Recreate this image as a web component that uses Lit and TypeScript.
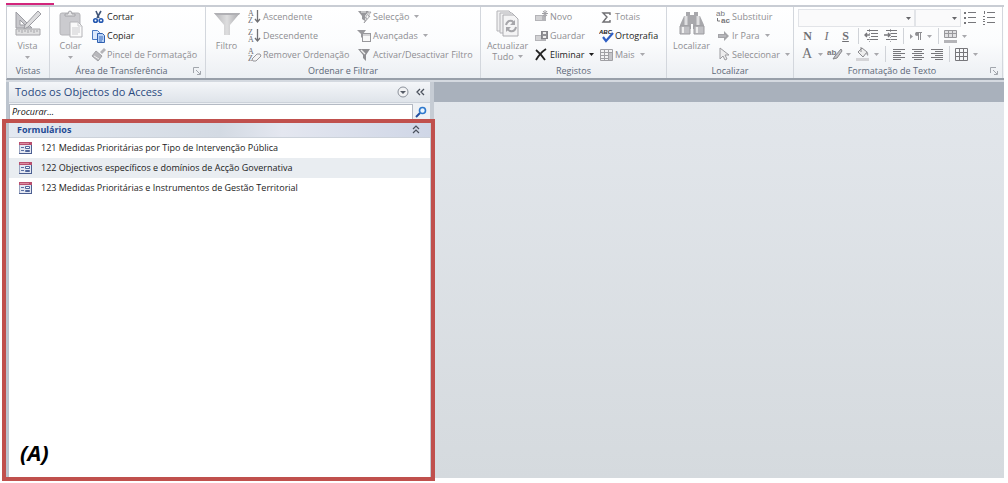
import { LitElement, html, svg, css, nothing, TemplateResult } from "lit";
import { customElement, property } from "lit/decorators.js";

type Art = ReturnType<typeof svg>;

const big: Record<string, Art> = {
  design: svg`<path d="M2 2v16h16z" fill="#c8c8cc" stroke="#9c9ca2"/><path d="M6 10v5h5z" fill="#fff" stroke="#9c9ca2"/>
    <path d="M24 1l3 3L14 17l-4 2 1-4z" fill="#dcdcde" stroke="#9c9ca2"/>
    <path d="M2 19h24v6H2z" fill="#dededf" stroke="#a6a6aa"/><path d="M5 20v2M8 20v3M11 20v2M14 20v3M17 20v2M20 20v3M23 20v2" stroke="#a6a6aa"/>`,
  paste: svg`<rect x="3" y="3" width="20" height="22" rx="2" fill="#cbcbcf" stroke="#b4b4b8"/><path d="M8 6V4h3q0-3 2-3t2 3h3v2z" fill="#e6e6e8" stroke="#a4a4a8"/>
    <path d="M13 12h8l4 4v11H13z" fill="#fafafa" stroke="#b4b4b8"/><path d="M21 12v4h4M15 18h8M15 20h8M15 22h8M15 24h6" fill="none" stroke="#cccccf"/>`,
  funnel: svg`<defs><linearGradient id="g"><stop stop-color="#b4b4b7"/><stop offset=".5" stop-color="#dededf"/><stop offset="1" stop-color="#a6a6aa"/></linearGradient></defs>
    <path d="M1 3h26L17 15v10h-6V15z" fill="url(#g)"/><path d="M1 3h26l-1 2H3z" fill="#b0b0b4"/>`,
  refresh: svg`<path d="M3 1h12l3 3v17H3z" fill="#f0f0f1" stroke="#b4b4b8"/><path d="M6 3h12l3 3v17H6z" fill="#f0f0f1" stroke="#b4b4b8"/><path d="M9 5h11l4 4v17H9z" fill="#f4f4f5" stroke="#acacb0"/>
    <path d="M12 15q1-5 6-4l2 2M22 17q-1 5-6 4l-3-2" fill="none" stroke="#a6a6aa" stroke-width="2"/><path d="M21 10v5h-5zM12 22v-5h5z" fill="#a6a6aa"/>`,
  binoculars: svg`<path d="M8 2h4v3h4V2h4v4h2l4 9v4H15v-5h-2v5H2v-4l4-9h2z" fill="#a8a8ac"/><path d="M2 16h10v8H2zM16 16h10v8H16z" fill="#c0c0c4" stroke="#9c9ca0"/>
    <path d="M8 6v9M20 6v9" stroke="#dedee0" stroke-width="3"/><path d="M5 17v6M19 17v6" stroke="#eee" stroke-width="2"/>`,
};

const sortLetters = (a: string, b: string) => svg`<g font-family="Liberation Serif, serif" font-size="8" fill="#707074"><text x="1" y="7">${a}</text><text x="1" y="14">${b}</text></g>`;
const lines = (xs: number[][]) => svg`<path d=${xs.map(([x, y, w]) => `M${x} ${y}h${w}`).join("")} stroke="#77777b" fill="none"/>`;

const small: Record<string, Art> = {
  cut: svg`<path d="M5 2l3 7M10 2L6 9" stroke="#405578" stroke-width="1.600"/><circle cx="4.500" cy="11.500" r="1.800" fill="none" stroke="#2458b0" stroke-width="1.600"/><circle cx="10" cy="11.500" r="1.800" fill="none" stroke="#2458b0" stroke-width="1.600"/>`,
  copy: svg`<path d="M1.500 2.500h5l2 2v7h-7z" fill="#dbe8fb" stroke="#4a78c0"/><path d="M6.500 5.500h5l2 2v7h-7z" fill="#b9d2f5" stroke="#2e5fb0"/><path d="M8 9h4M8 11h4M8 13h3" stroke="#3d6fc0"/>`,
  brush: svg`<path d="M9 5l4-4 2 2-4 4z" fill="#b4b4b8"/><path d="M5 4l6 5-4 5-6-5z" fill="#b8b8bc" stroke="#a2a2a6"/><path d="M3 9l5 3" stroke="#eee"/>`,
  asc: svg`${sortLetters("A", "Z")}<path d="M10.500 1v12M8 10l2.500 3 2.500-3" fill="none" stroke="#707074" stroke-width="1.300"/>`,
  desc: svg`${sortLetters("Z", "A")}<path d="M10.500 1v12M8 10l2.500 3 2.500-3" fill="none" stroke="#707074" stroke-width="1.300"/>`,
  unsort: svg`${sortLetters("A", "Z")}<path d="M5 12l5-5q4-1 4 2l-5 5q-4 1-4-2z" fill="#f3f3f4" stroke="#98989c"/>`,
  selection: svg`<path d="M1 2h11L8 7v5L5 10V7z" fill="#98989c"/><path d="M4 3h5" stroke="#eee"/><path d="M12 3L8 9h2l-3 5 6-7h-2l3-4z" fill="#f5f5f5" stroke="#98989c" stroke-width=".8"/>`,
  advanced: svg`<path d="M0 2h9L6 6v5L4 9V6z" fill="#98989c"/><rect x="5.500" y="5.500" width="8" height="8" fill="#f8f8f8" stroke="#98989c"/><path d="M6 7h7" stroke="#b0b0b4"/>`,
  toggle: svg`<path d="M1 2h12L9 8v6L6 11V8z" fill="#8e8e92"/><path d="M4 3l4 4" stroke="#eee" stroke-width="1.500"/>`,
  add: svg`<path d="M1 6h11v6H1z" fill="#b4b4b8"/><path d="M2 8h6M2 10h6" stroke="#f0f0f0"/><path d="M11 1v7M8 4.500h6M9 2l4 5M13 2L9 7" stroke="#a0a0a4"/>`,
  save: svg`<path d="M1 7h11v6H1z" fill="#b4b4b8"/><path d="M2 9h5M2 11h5" stroke="#f0f0f0"/><rect x="7.500" y="3.500" width="6" height="7" fill="#929296" stroke="#85858a"/><path d="M9 4h3v2H9zM9 8h3v2H9z" fill="#eee"/>`,
  remove: svg`<path d="M2 3q5 4 9 10M12 2Q6 6 2 13" fill="none" stroke="#222" stroke-width="1.800"/>`,
  sum: svg`<path d="M11 6V4H4l4 4-4 5h7v-2" fill="none" stroke="#6e6e72" stroke-width="1.400"/>`,
  spell: svg`<text x="0" y="6" font-family="Liberation Sans, sans-serif" font-size="6" font-weight="700" font-style="italic" fill="#222">ABC</text><path d="M4 9l3 4 7-8" fill="none" stroke="#2f5fc4" stroke-width="2.200"/>`,
  more: svg`<path d="M1.500 2.500h12v11h-12zM1 5.500h12M1 8.500h12M1 11.500h12M5.500 3v10M9.500 3v10" fill="#f2f2f3" stroke="#a0a0a4"/><path d="M10 6h3v7h-3z" fill="#c4c4c8"/>`,
  replace: svg`<g font-family="Liberation Sans, sans-serif" font-size="8" fill="#77777b"><text x="0" y="7">ab</text><text x="5" y="14" font-weight="700">ac</text></g><path d="M1.500 9v3H4" fill="none" stroke="#77777b"/>`,
  goto: svg`<path d="M2 6h6V3l5 5-5 5v-3H2z" fill="#a4a4a8"/><path d="M3 8h7" stroke="#c8c8cc"/>`,
  pointer: svg`<path d="M4 1v11l3-3 2 4 2-1-2-4h4z" fill="#ededee" stroke="#9c9ca0"/>`,
  bullets: svg`<path d="M1 2h2v2H1zM1 7h2v2H1zM1 12h2v2H1z" fill="#77777b"/>${lines([[5, 2.5, 8], [5, 7.5, 8], [5, 12.5, 8]])}`,
  numbers: svg`<path d="M2.500 1v3M1 6.500h2M1 9.500h2M1 11.500h2M1 14.500h2" stroke="#77777b"/>${lines([[5, 2.5, 8], [5, 7.5, 8], [5, 12.5, 8]])}`,
  outdent: svg`${lines([[3, 2.500, 11], [7, 5.500, 7], [7, 8.500, 7], [3, 11.500, 11]])}<path d="M6 7H1M3 5L1 7l2 2" fill="none" stroke="#77777b" stroke-width="1.400"/><path d="M5.500 1v14" stroke="#a8a8ac" stroke-dasharray="1 1"/>`,
  indent: svg`${lines([[3, 2.500, 11], [8, 5.500, 6], [8, 8.500, 6], [3, 11.500, 11]])}<path d="M1 7h6M5 5l2 2-2 2" fill="none" stroke="#77777b" stroke-width="1.400"/><path d="M7.500 1v14" stroke="#a8a8ac" stroke-dasharray="1 1"/>`,
  direction: svg`<path d="M2 6l3 2.500L2 11z" fill="#98989c"/><path d="M10.500 4v8M12.500 4v8M8 4.500h6" stroke="#8e8e92"/><circle cx="9" cy="6" r="2" fill="#8e8e92"/>`,
  rows: svg`<path d="M1.500 2.500h12v7h-12zM1 5.500h12M5.500 2v8M9.500 2v8" fill="#e0e0e2" stroke="#98989c"/><path d="M1 12h13v3H1z" fill="#b4b4b8"/>`,
  highlight: svg`<text x="0" y="9" font-family="Liberation Sans, sans-serif" font-size="8" font-weight="700" fill="#77777b">ab</text><path d="M14 3L8 10l-2 3 4-1 5-7z" fill="#c4c4c8" stroke="#88888c"/>`,
  bucket: svg`<path d="M3 6l4-4 5 4-4 5z" fill="#eee" stroke="#8a8a8e"/><path d="M6 6V1" stroke="#8a8a8e"/><path d="M11 5q3 1 2 5-2-1-2-5" fill="#a0a0a4"/><path d="M1 12h13v3H1z" fill="#d4d4d7"/>`,
  left: lines([[2, 3.500, 12], [2, 5.500, 8], [2, 7.500, 12], [2, 9.500, 8], [2, 11.500, 12], [2, 13.500, 8]]),
  center: lines([[2, 3.500, 12], [4, 5.500, 8], [2, 7.500, 12], [4, 9.500, 8], [2, 11.500, 12], [4, 13.500, 8]]),
  right: lines([[2, 3.500, 12], [6, 5.500, 8], [2, 7.500, 12], [6, 9.500, 8], [2, 11.500, 12], [6, 13.500, 8]]),
  grid: svg`<path d="M1.500 2.500h12v12h-12zM5.500 2v12M9.500 2v12M1 6.500h12M1 10.500h12" fill="none" stroke="#77777b"/>`,
  form: svg`<rect x="1.500" y="2.500" width="12" height="11" fill="#e3e7f1" stroke="#9aa5c0"/><path d="M1 2h13v3H1z" fill="#b9506f"/><path d="M2 3.500h9" stroke="#d98aa0"/><path d="M3 7.500h3M3 10.500h3" stroke="#5a70a4"/><path d="M7.500 6.500h4v2h-4zM7.500 10.500h4v1h-4z" fill="#fff" stroke="#4d6399"/><path d="M13.500 5v9M1 13.500h13" stroke="#4c5f92"/>`,
};

const icon = (name: string) => html`<svg class="icon" width="16" height="16" viewBox="0 0 16 16" aria-hidden="true">${small[name]}</svg>`;
const arrow = html`<svg class="arrow" width="5" height="3" viewBox="0 0 5 3" aria-hidden="true"><path d="M0 0h5L2.500 3z" fill="currentColor" /></svg>`;

type Cmd = [icon: string, label: string, opts?: { on?: boolean; menu?: boolean }];

@customElement("ribbon-group")
class RibbonGroup extends LitElement {
  @property() label = "";
  @property({ type: Boolean }) launcher = false;
  static styles = css`
    :host { display: flex; flex-direction: column; flex: none; box-sizing: border-box; border-right: 1px solid #d3d7dd; }
    .body { display: flex; flex: 1; min-height: 0; }
    .foot { display: flex; align-items: center; height: 15px; flex: none; }
    .name { flex: 1; text-align: center; color: #5d6878; white-space: nowrap; }
    .launch { padding: 0; margin-right: 4px; border: 0; background: none; height: 8px; width: 8px; display: flex; }
  `;
  render() {
    return html`<div class="body"><slot></slot></div>
      <div class="foot"><span class="name">${this.label}</span>
        ${this.launcher ? html`<button class="launch" aria-label=${this.label}><svg width="8" height="8"><path d="M.5 6V.5H6M3 3l4 4M7.500 4v3.500H4" fill="none" stroke="#a2a6ad" /></svg></button>` : nothing}
      </div>`;
  }
}

@customElement("app-root")
export class AppRoot extends LitElement {
  static styles = css`
    :host { display: block; height: 100vh; min-height: 320px; overflow: hidden; background: #fff; font: 9px/14px "Open Sans", "Noto Sans", sans-serif; color: #333; }
    * { box-sizing: border-box; }
    button, select, input { font: inherit; color: inherit; margin: 0; padding: 0; border: 0; background: none; }
    button { white-space: nowrap; }
    svg { display: block; flex: none; }
    .app { display: flex; flex-direction: column; height: 100%; padding: 3px 4px 5px 6px; }
    .tab { width: 48px; height: 2px; background: #d3267c; }
    .ribbon { display: flex; flex: none; height: 75px; border: 1px solid #c9cdd4; border-top-width: 2px; border-bottom: 2px solid #989fa9; border-right: 0; background: linear-gradient(#fff, #fbfcfd 50%, #eceff3); overflow: hidden; }
    .views { width: 43px; } .clip { width: 156px; } .sort { width: 275px; }
    .records { width: 186px; } .find { width: 127px; } .format { width: 209px; }
    .large { display: flex; flex-direction: column; align-items: center; line-height: 11px; color: #8e8e92; padding-top: 3px; gap: 2px; flex: none; }
    .large.w41 { width: 41px; } .large.w49 { width: 49px; } .large.w53 { width: 53px; }
    .large .arrow { margin-top: 3px; }
    .arrow { color: #a8a8ac; }
    .stack { display: flex; flex-direction: column; align-items: center; }
    .inline { display: flex; align-items: center; gap: 4px; }
    .inline .arrow { margin: 0; }
    .col { display: flex; flex-direction: column; align-items: flex-start; flex: none; }
    .col.wide { width: 110px; } .col.mid { width: 65px; }
    .cmd { display: flex; align-items: center; height: 19px; flex: none; color: #8e8e92; }
    .cmd.on, .cmd.on .arrow { color: #1c1c1c; }
    .cmd .arrow { margin-left: 5px; }
    .tools { padding: 2px 0 0 4px; }
    .line { display: flex; align-items: center; height: 18px; color: #909094; }
    .pick { appearance: none; height: 18px; border: 1px solid #e2e4e8; border-radius: 0; background: #fafafb; color: #606064; }
    .pickwrap { display: grid; align-items: center; }
    .pickwrap > * { grid-area: 1 / 1; }
    .pickwrap .arrow { justify-self: end; margin-right: 4px; pointer-events: none; color: #66666a; }
    .font { width: 117px; } .size { width: 46px; }
    .cell { width: 19px; height: 18px; display: flex; align-items: center; justify-content: center; font: 12px/16px "Liberation Serif", serif; color: #707074; }
    .split { width: 28px; justify-content: flex-start; gap: 3px; padding-left: 1px; }
    .split .glyph { width: 16px; text-align: center; font-size: 14px; }
    .bold { font-weight: 700; } .ital { font-style: italic; } .under { text-decoration: underline; }
    .sep { width: 1px; height: 16px; margin: 0 3px; background: #d0d3d8; }
    .work { position: relative; display: flex; flex: 1; min-height: 0; border-top: 2px solid #d4d9e0; }
    .pane { display: flex; flex-direction: column; width: 428px; background: #fff; border-left: 3px solid #bcc4ce; border-right: 4px solid #c6ccd4; }
    .head { display: flex; align-items: center; height: 21px; padding: 0 0 0 6px; background: linear-gradient(#f4f6f9, #dfe4ea); border-bottom: 1px solid #ccd2da; }
    h1 { flex: 1; margin: 0; font: 11px/18px "Open Sans", sans-serif; color: #2b4a80; }
    .head button { height: 16px; display: flex; align-items: center; justify-content: center; width: 18px; }
    .search { display: flex; height: 17px; align-items: center; background: #eef1f5; padding-right: 3px; gap: 2px; }
    .search input { flex: 1; min-width: 0; height: 16px; padding: 0 2px; background: #fff; border: 1px solid #b4bac4; font-style: italic; border-radius: 0; }
    .search input::placeholder { color: #111; opacity: 1; }
    .cat { display: flex; align-items: center; justify-content: space-between; height: 17px; padding: 1px 10px 0 8px; margin-top: 1px; font-weight: 700; color: #224a94; background: linear-gradient(90deg, #e3e9f1, #d3dae3 50%, #e4e7f0 65%, #cfd6e6); border-bottom: 1px solid #ccd2da; }
    ul { list-style: none; margin: 0; padding: 0; }
    .item { display: flex; align-items: center; gap: 7px; height: 20px; padding-left: 9px; color: #222; text-decoration: none; }
    .item.alt { background: #e9edf1; }
    .desk { flex: 1; background: linear-gradient(#e3e7ec, #d5dade); }
    .bar { height: 20px; background: #a9b1bc; }
    .frame { position: absolute; left: -4px; top: 37px; width: 433px; bottom: -3px; border: 4px solid #c0504d; pointer-events: none; }
    .tag { position: absolute; left: 14px; bottom: 12px; font: italic 700 22px/28px "Open Sans", sans-serif; color: #000; }
  `;

  private cmds(list: Cmd[], cls = "") {
    return html`<div class="col ${cls}">${list.map(([i, label, o]) => html`<button class="cmd ${o?.on ? "on" : ""}">${icon(i)}<span>${label}</span>${o?.menu ? arrow : nothing}</button>`)}</div>`;
  }

  private large(name: string, label: string | TemplateResult, cls: string, menu = false) {
    return html`<button class="large ${cls}"><svg width="28" height="28" viewBox="0 0 28 28" aria-hidden="true">${big[name]}</svg><span class="stack">${label}</span>${menu ? arrow : nothing}</button>`;
  }

  private cell(name: string, label: string) {
    return html`<button class="cell" aria-label=${label}>${icon(name)}</button>`;
  }

  private split(content: TemplateResult, label: string) {
    return html`<button class="cell split" aria-label=${label}>${content}${arrow}</button>`;
  }

  private forms = [
    "121 Medidas Prioritárias por Tipo de Intervenção Pública",
    "122 Objectivos específicos e domínios de Acção Governativa",
    "123 Medidas Prioritárias e Instrumentos de Gestão Territorial",
  ];

  render() {
    const menu = { menu: true };
    return html`<div class="app">
      <div class="tab"></div>
      <nav class="ribbon">
        <ribbon-group class="views" label="Vistas">${this.large("design", "Vista", "w41", true)}</ribbon-group>
        <ribbon-group class="clip" label="Área de Transferência" launcher>
          ${this.large("paste", "Colar", "w41", true)}
          ${this.cmds([["cut", "Cortar", { on: true }], ["copy", "Copiar", { on: true }], ["brush", "Pincel de Formatação"]])}
        </ribbon-group>
        <ribbon-group class="sort" label="Ordenar e Filtrar">
          ${this.large("funnel", "Filtro", "w41")}
          ${this.cmds([["asc", "Ascendente"], ["desc", "Descendente"], ["unsort", "Remover Ordenação"]], "wide")}
          ${this.cmds([["selection", "Selecção", menu], ["advanced", "Avançadas", menu], ["toggle", "Activar/Desactivar Filtro"]])}
        </ribbon-group>
        <ribbon-group class="records" label="Registos">
          ${this.large("refresh", html`<span>Actualizar</span><span class="inline">Tudo ${arrow}</span>`, "w53")}
          ${this.cmds([["add", "Novo"], ["save", "Guardar"], ["remove", "Eliminar", { on: true, menu: true }]], "mid")}
          ${this.cmds([["sum", "Totais"], ["spell", "Ortografia", { on: true }], ["more", "Mais", menu]])}
        </ribbon-group>
        <ribbon-group class="find" label="Localizar">
          ${this.large("binoculars", "Localizar", "w49")}
          ${this.cmds([["replace", "Substituir"], ["goto", "Ir Para", menu], ["pointer", "Seleccionar", menu]])}
        </ribbon-group>
        <ribbon-group class="format" label="Formatação de Texto" launcher>
          <div class="tools">
            <div class="line">
              <span class="pickwrap"><select class="pick font" aria-label="Tipo de letra"></select>${arrow}</span>
              <span class="pickwrap"><select class="pick size" aria-label="Tamanho"></select>${arrow}</span>
              ${this.cell("bullets", "Marcas")}${this.cell("numbers", "Numeração")}
            </div>
            <div class="line">
              <button class="cell bold">N</button><button class="cell ital">I</button><button class="cell under bold">S</button>
              <span class="sep"></span>${this.cell("outdent", "Diminuir avanço")}${this.cell("indent", "Aumentar avanço")}
              <span class="sep"></span>${this.split(icon("direction"), "Direcção")}
              <span class="sep"></span>${this.split(icon("rows"), "Cor alternativa")}
            </div>
            <div class="line">
              ${this.split(html`<span class="glyph">A</span>`, "Cor")}${this.split(icon("highlight"), "Realce")}${this.split(icon("bucket"), "Fundo")}
              <span class="sep"></span>${this.cell("left", "Esquerda")}${this.cell("center", "Centro")}${this.cell("right", "Direita")}
              <span class="sep"></span>${this.split(icon("grid"), "Linhas de grelha")}
            </div>
          </div>
        </ribbon-group>
      </nav>
      <main class="work">
        <section class="pane">
          <header class="head"><h1>Todos os Objectos do Access</h1>
            <button aria-label="Menu"><svg width="12" height="12"><circle cx="6" cy="6" r="5" fill="#f1f2f4" stroke="#8b919b" /><path d="M3 5h6L6 8z" fill="#555b66" /></svg></button>
            <button aria-label="Recolher"><svg width="10" height="8"><path d="M4 1L1 4l3 3M8 1L5 4l3 3" fill="none" stroke="#4a505c" stroke-width="1.300" /></svg></button>
          </header>
          <div class="search"><input type="search" aria-label="Procurar" placeholder="Procurar..." />
            <button aria-label="Pesquisar"><svg width="12" height="12"><path d="M5 7l-4 4" stroke="#234f9e" stroke-width="2" /><circle cx="7.500" cy="4.500" r="3" fill="#e9f4ff" stroke="#2e78cc" stroke-width="1.600" /></svg></button>
          </div>
          <button class="cat"><span>Formulários</span><svg width="8" height="9"><path d="M1 4l3-3 3 3M1 8l3-3 3 3" fill="none" stroke="#4a505c" stroke-width="1.200" /></svg></button>
          <ul>${this.forms.map((f, i) => html`<li><a class="item ${i === 1 ? "alt" : ""}" href="#">${icon("form")}<span>${f}</span></a></li>`)}</ul>
        </section>
        <section class="desk"><div class="bar"></div></section>
        <div class="frame"></div>
        <span class="tag">(A)</span>
      </main>
    </div>`;
  }
}
